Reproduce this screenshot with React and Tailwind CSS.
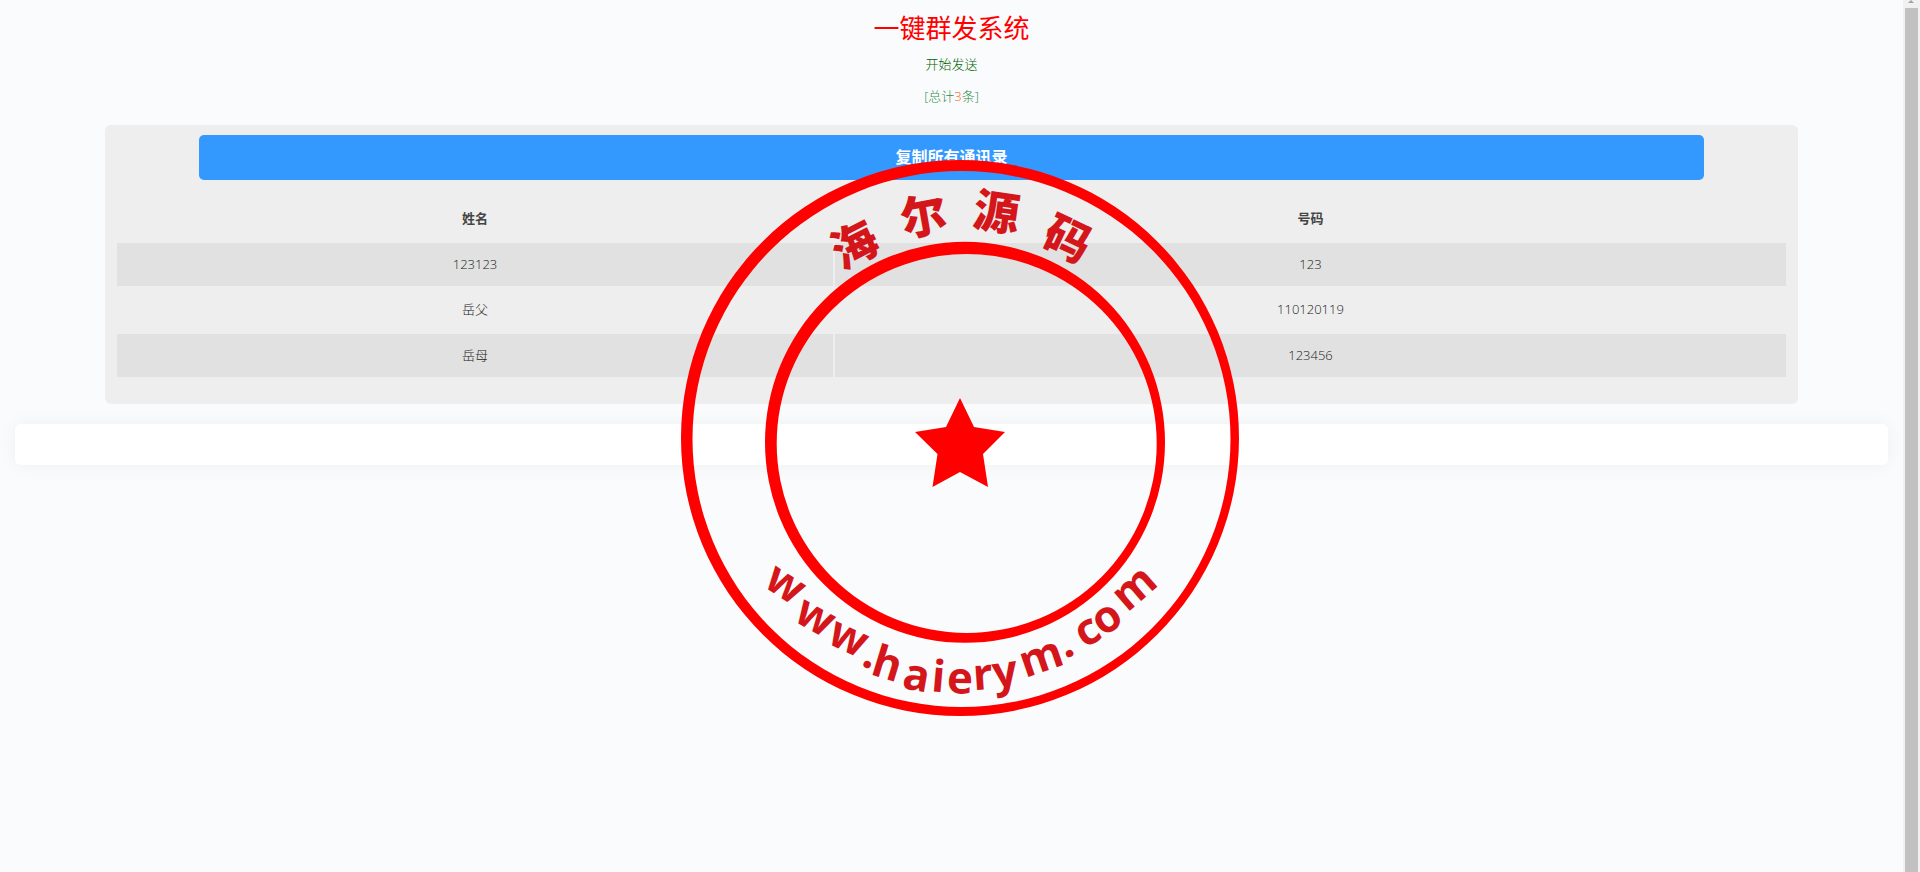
const SANS = "font-['Open_Sans','Noto_Sans_CJK_SC',sans-serif]";

const ring = (cx, cy, rx, ry) =>
  `M${cx - rx} ${cy}a${rx} ${ry} 0 1 0 ${2 * rx} 0a${rx} ${ry} 0 1 0 ${-2 * rx} 0Z`;

const TOP = [
  ["海", 853, 242, -27],
  ["尔", 923, 213, -10],
  ["源", 997, 209, 8],
  ["码", 1069, 236, 25],
];

const BOTTOM = [
  ["w", 784, 586, 33, -5.4],
  ["w", 814, 619, 29, -5.4],
  ["w", 847.5, 640, 25, -5.4],
  [".", 867, 665, 20, -14.5],
  ["h", 888, 662, 17, 0],
  ["a", 916, 679, 10, -5.4],
  ["i", 938.6, 675, 5, 0],
  ["e", 960, 682, 1, -5.4],
  ["r", 983, 678, -4, -5.4],
  ["y", 1006, 680, -8, -10.5],
  ["m", 1042, 660, -19, -5.4],
  [".", 1070, 654, -25, -14.5],
  ["c", 1088.6, 633, -30, -5.4],
  ["o", 1107.8, 620, -33, -5.4],
  ["m", 1136, 590, -41, -5.4],
];

function Row({ a, b, striped }) {
  return (
    <div className={`grid h-[43px] grid-cols-[716px_2px_1fr] items-center text-center text-[13px] font-light text-[#222] ${striped ? "bg-[#e1e1e1]" : ""}`}>
      <div className={striped ? "pt-[2px]" : ""}>{a}</div>
      <div className={`h-full ${striped ? "bg-[#eeeeee]" : ""}`} />
      <div className={striped ? "pt-[2px]" : ""}>{b}</div>
    </div>
  );
}

export default function App() {
  return (
    <div className={`relative flex h-[872px] w-full overflow-hidden bg-[#fafbfd] ${SANS}`}>
      <main className="w-[1903px] shrink-0">
        <div className="flex h-[125px] flex-col items-center">
          <h1 className="mt-[10px] h-9 text-[26px] leading-9 font-normal text-[#ff0000]">一键群发系统</h1>
          <p className="mt-[9px] h-[18px] text-[13px] leading-[18px] font-light text-[#006400]">开始发送</p>
          <p className="mt-[14px] h-[18px] text-[13px] leading-[18px] font-light text-[#2e8b47]">
            [总计<span className="text-[#ff5722]">3</span>条]
          </p>
        </div>

        <section className="ml-[105px] h-[279px] w-[1693px] rounded-md bg-[#eeeeee] px-3 pt-[10px]">
          <button className="mx-auto block h-[45px] w-[1505px] rounded-[5px] bg-[#3399ff] text-center text-base leading-[45px] font-bold text-white">
            复制所有通讯录
          </button>
          <div className="mt-[17px] flex flex-col gap-[2.5px]">
            <div className="grid h-[43px] grid-cols-[716px_2px_1fr] items-center text-center text-[13px] font-bold text-[#444]">
              <div>姓名</div>
              <div />
              <div>号码</div>
            </div>
            <Row a="123123" b="123" striped />
            <Row a="岳父" b="110120119" />
            <Row a="岳母" b="123456" striped />
          </div>
        </section>

        <div className="mt-5 ml-[15px] h-[41px] w-[1873px] rounded-md bg-white shadow-[0_0_20px_rgba(0,0,0,0.05)]" />
      </main>

      <div className="relative flex-1 bg-[#f1f1f1]">
        <div className="absolute top-0 left-[5px] h-0 w-0 border-x-[3.5px] border-b-[3px] border-x-transparent border-b-[#a3a3a3]" />
        <div className="absolute top-[8px] bottom-0 left-[2px] w-[13px] bg-[#c1c1c1]" />
      </div>

      <svg className="pointer-events-none absolute top-0 left-0 h-[872px] w-[1920px]" viewBox="0 0 1920 872">
        <path fill="#ff0000" fillRule="evenodd" d={`${ring(960, 438, 279, 278)}${ring(961.5, 439, 269, 268)}`} />
        <path fill="#ff0000" fillRule="evenodd" d={`${ring(965, 442.3, 200, 200.5)}${ring(966.7, 443.5, 190, 189.5)}`} />
        <polygon
          fill="#ff0000"
          points="960,398 974,427 1005,432 983,454 988,487 960,472 932.5,487 937.5,454 915,432 946,427"
        />
        {TOP.map(([c, x, y, r]) => (
          <text
            key={c}
            x={x}
            y={y}
            fill="#d4161b"
            fontSize="46"
            fontWeight="900"
            fontFamily="'Noto Sans CJK SC', sans-serif"
            textAnchor="middle"
            dominantBaseline="central"
            transform={`rotate(${r} ${x} ${y})`}
          >
            {c}
          </text>
        ))}
        {BOTTOM.map(([c, x, y, r, dy], i) => (
          <text
            key={i}
            x={x}
            y={y + dy}
            fill="#d4161b"
            fontSize="44"
            fontWeight="700"
            fontFamily="'Open Sans', sans-serif"
            textAnchor="middle"
            dominantBaseline="central"
            transform={`rotate(${r} ${x} ${y})`}
          >
            {c}
          </text>
        ))}
      </svg>
    </div>
  );
}
